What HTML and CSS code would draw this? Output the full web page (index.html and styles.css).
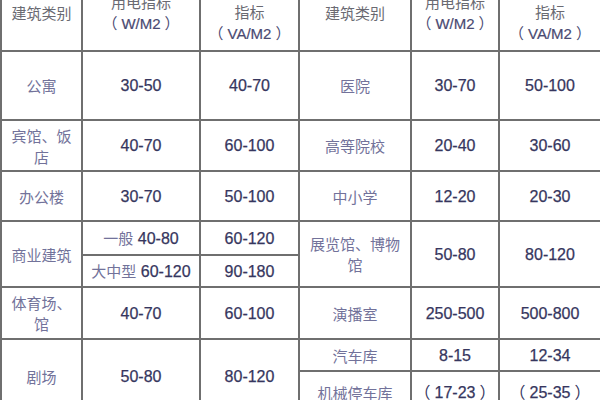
FILE: index.html
```html
<!DOCTYPE html>
<html lang="zh">
<head>
<meta charset="utf-8">
<title>建筑用电指标</title>
<link rel="stylesheet" href="styles.css">
</head>
<body>
<table class="grid">
  <colgroup>
    <col class="c1"><col class="c2"><col class="c3"><col class="c4"><col class="c5"><col class="c6">
  </colgroup>
  <tr class="r-head">
    <th class="hz">建筑类别</th>
    <th><span class="hz">用电指标</span><br><span class="hu"><span class="po">（</span>W/M2<span class="pc">）</span></span></th>
    <th><span class="hz">变压器容量</span><br><span class="hz">指标</span><br><span class="hu"><span class="po">（</span>VA/M2<span class="pc">）</span></span></th>
    <th class="hz">建筑类别</th>
    <th><span class="hz">用电指标</span><br><span class="hu"><span class="po">（</span>W/M2<span class="pc">）</span></span></th>
    <th><span class="hz">变压器容量</span><br><span class="hz">指标</span><br><span class="hu"><span class="po">（</span>VA/M2<span class="pc">）</span></span></th>
  </tr>
  <tr class="r1">
    <td class="zh">公寓</td><td class="num">30-50</td><td class="num">40-70</td>
    <td class="zh">医院</td><td class="num">30-70</td><td class="num">50-100</td>
  </tr>
  <tr class="r2">
    <td class="zh">宾馆、饭<br>店</td><td class="num">40-70</td><td class="num">60-100</td>
    <td class="zh">高等院校</td><td class="num">20-40</td><td class="num">30-60</td>
  </tr>
  <tr class="r3">
    <td class="zh">办公楼</td><td class="num">30-70</td><td class="num">50-100</td>
    <td class="zh">中小学</td><td class="num">12-20</td><td class="num">20-30</td>
  </tr>
  <tr class="r4a">
    <td class="zh" rowspan="2">商业建筑</td>
    <td class="num"><span class="zh">一般</span> 40-80</td><td class="num">60-120</td>
    <td class="zh" rowspan="2">展览馆、博物<br>馆</td><td class="num" rowspan="2">50-80</td><td class="num" rowspan="2">80-120</td>
  </tr>
  <tr class="r4b">
    <td class="num"><span class="zh">大中型</span> 60-120</td><td class="num">90-180</td>
  </tr>
  <tr class="r5">
    <td class="zh">体育场、<br>馆</td><td class="num">40-70</td><td class="num">60-100</td>
    <td class="zh">演播室</td><td class="num">250-500</td><td class="num">500-800</td>
  </tr>
  <tr class="r6a">
    <td class="zh" rowspan="2">剧场</td><td class="num" rowspan="2">50-80</td><td class="num" rowspan="2">80-120</td>
    <td class="zh">汽车库</td><td class="num">8-15</td><td class="num">12-34</td>
  </tr>
  <tr class="r6b">
    <td class="zh">机械停车库</td><td class="num"><span class="po">（</span>17-23<span class="pc">）</span></td><td class="num"><span class="po">（</span>25-35<span class="pc">）</span></td>
  </tr>
</table>
</body>
</html>
```

FILE: styles.css
```css
html, body {
  margin: 0;
  padding: 0;
  background: #ffffff;
  overflow: hidden;
}

.grid {
  border-collapse: collapse;
  table-layout: fixed;
  width: 600px;
  margin-top: -28px;
  font-family: "Liberation Sans", Arial, sans-serif;
}

.c1 { width: 81px; }
.c2 { width: 118px; }
.c3 { width: 99px; }
.c4 { width: 112px; }
.c5 { width: 88px; }
.c6 { width: 102px; }

.grid th,
.grid td {
  border: 2px solid #6f6f6f;
  padding: 0;
  text-align: center;
  vertical-align: middle;
  font-weight: normal;
}

.r-head { height: 78px; }
.r1 { height: 69px; }
.r2 { height: 51px; }
.r3 { height: 50px; }
.r4a { height: 34px; }
.r4b { height: 32px; }
.r5 { height: 52px; }
.r6a { height: 32px; }
.r6b { height: 42px; }

.hz {
  font-family: "Noto Sans CJK SC", sans-serif;
  font-size: 15px;
  line-height: 21px;
  color: #6a6a72;
}

.hu {
  font-family: "Liberation Sans", "Noto Sans CJK SC", sans-serif;
  font-size: 15px;
  line-height: 21px;
  color: #4a4a72;
  -webkit-text-stroke: 0.2px #4a4a72;
}

.po,
.pc {
  font-family: "Noto Sans CJK SC", sans-serif;
  -webkit-text-stroke: 0;
}

.po { padding-right: 4px; }
.pc { padding-left: 4px; }

.zh {
  font-family: "Noto Sans CJK SC", sans-serif;
  font-size: 15px;
  line-height: 21px;
  color: #72729a;
  -webkit-text-stroke: 0;
}

.num {
  font-family: "Liberation Sans", "Noto Sans CJK SC", sans-serif;
  font-size: 16px;
  line-height: 21px;
  color: #36365e;
  -webkit-text-stroke: 0.25px #36365e;
}
```
